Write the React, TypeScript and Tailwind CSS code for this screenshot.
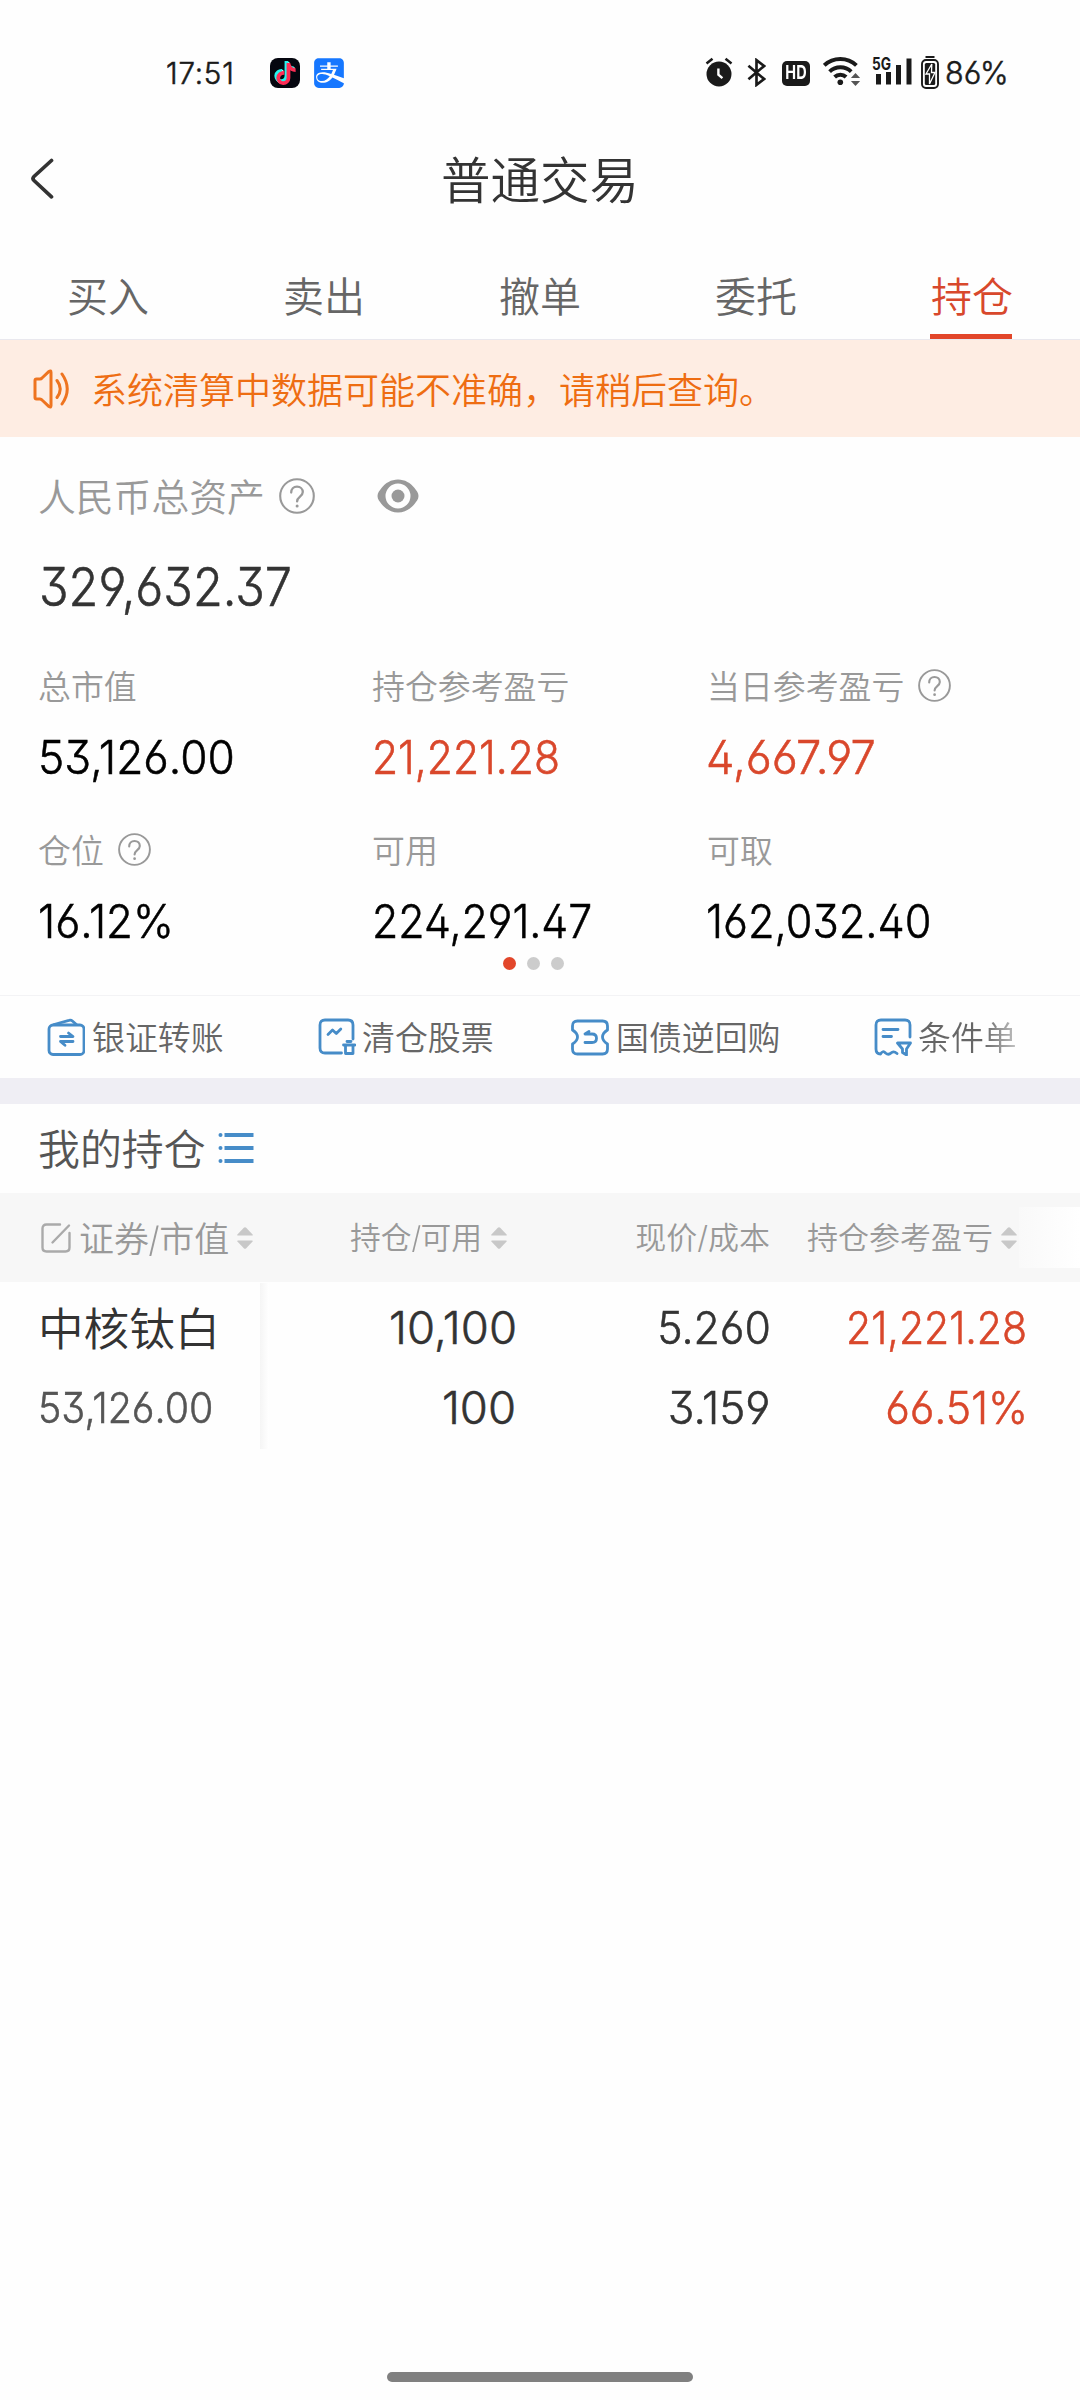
import React from 'react';
import { FaAlipay, FaTiktok } from 'react-icons/fa6';

type NumProps = { children: React.ReactNode; className?: string };

// Figures use open 6/9 shapes and a flat-topped 3, slightly condensed.
function Num({ children, className = '' }: NumProps) {
  return (
    <span
      className={`inline-block whitespace-nowrap font-light [-webkit-text-stroke:0.55px_currentColor] [font-feature-settings:'ss01','cv09'] ${className}`}
    >
      {children}
    </span>
  );
}

function Help({ className }: { className: string }) {
  return (
    <svg viewBox="0 0 36 36" fill="none" stroke="#999" className={className}>
      <circle cx="18" cy="18" r="16.8" strokeWidth="2.1" />
      <path d="M12.2 14.6c0-3.500 2.400-5.900 5.800-5.900s5.800 2.300 5.800 5.400c0 4.500-5.700 4.600-5.700 9.300" strokeWidth="2.300" strokeLinecap="round" />
      <circle cx="18.1" cy="28" r="1.500" fill="#999" stroke="none" />
    </svg>
  );
}

function Sort() {
  return (
    <svg viewBox="0 0 16 22" className="h-[22px] w-4 shrink-0" fill="#c8c8c8">
      <path d="M6.8.8a1.7 1.7 0 0 1 2.4 0L15.6 7.4q.6 1.2-.6 1.2H1Q-.2 8.6.4 7.4z" />
      <path d="M6.8 21.2a1.7 1.7 0 0 0 2.4 0l6.4-6.6q.6-1.2-.6-1.2H1q-1.2 0-.6 1.2z" />
    </svg>
  );
}

function StatusBar() {
  return (
    <div className="flex h-[130px] items-start pl-[166px] pt-[52px] text-[#1a1a1a]">
      <div className="flex h-[42px] w-[104px] items-center">
        <Num className="text-[29.5px] tracking-[0.8px]">17:51</Num>
      </div>
      <div className="mt-[6px] grid h-[30px] w-[30px] place-items-center rounded-lg bg-[#05060f]">
        <FaTiktok className="col-start-1 row-start-1 h-[22px] w-[20px] -translate-x-px -translate-y-px text-[#25f4ee]" />
        <FaTiktok className="col-start-1 row-start-1 h-[22px] w-[20px] translate-x-px translate-y-px text-[#fe2c55]" />
        <FaTiktok className="col-start-1 row-start-1 h-[22px] w-[20px] text-white" />
      </div>
      <FaAlipay className="ml-[14px] mt-[4px] h-[34px] w-[30px] text-[#1677ff]" />
      <svg viewBox="0 0 28 30" className="ml-[361px] mt-[5px] h-[30px] w-[28px]" fill="none" stroke="#1a1a1a">
        <circle cx="14" cy="17" r="12.5" fill="#1a1a1a" stroke="none" />
        <path d="M1.5 6.5 7.5 1.8M26.5 6.5l-6-4.7" strokeWidth="2.6" />
        <path d="M13.4 11.5v6.2l4 3.4" stroke="#fff" strokeWidth="2.4" />
      </svg>
      <svg viewBox="0 0 20 30" className="ml-[14px] mt-[6px] h-[29px] w-[19px]" fill="none" stroke="#1a1a1a" strokeWidth="2.8">
        <path d="M1.5 8 18 21.8 10 28V2l8 6.2L1.5 22" />
      </svg>
      <div className="ml-[16px] mt-[9px] flex h-[25px] w-[28px] items-center justify-center rounded-[5px] bg-[#1a1a1a] text-[19px] font-bold text-white">
        <span className="scale-x-[.76]">HD</span>
      </div>
      <svg viewBox="0 0 38 30" className="ml-[13px] mt-[4px] h-[30px] w-[38px]" fill="none" stroke="#1a1a1a" strokeWidth="4">
        <path d="M1.2 9.4a23.5 23.5 0 0 1 32.2 0M6.6 15.6a15.8 15.8 0 0 1 21.6 0M11.6 21a8.4 8.4 0 0 1 11.5 0" />
        <circle cx="17.3" cy="26.2" r="2.8" fill="#1a1a1a" stroke="none" />
        <path d="m32.5 17 4.6 5h-9.2zM32.5 30l4.6-5h-9.2z" fill="#555" stroke="none" />
      </svg>
      <svg viewBox="0 -8 42 38" className="ml-[11px] -mt-[4px] h-[38px] w-[42px]" fill="#1a1a1a">
        <text x="0" y="14" fontSize="17" fontWeight="700" textLength="19" lengthAdjust="spacingAndGlyphs" fontFamily="Inter">5G</text>
        <path d="M4 18h5v10.500H4zM14 16h5v12.500h-5zM24 9h5v19.500h-5zM34.500 2.500h5v26h-5z" />
      </svg>
      <svg viewBox="0 0 18 33" className="ml-[7px] mt-[4px] h-[33px] w-[18px]" fill="none" stroke="#1a1a1a">
        <path d="M4.500 1h9" strokeWidth="2" />
        <rect x="1" y="4" width="16" height="28" rx="4" strokeWidth="1.900" />
        <rect x="3.800" y="7" width="10.400" height="22" rx="1.500" fill="#1a1a1a" stroke="none" />
        <path d="M10.800 8 5 18h3.500v10L14 16.500h-3.500z" fill="#1a1a1a" stroke="#fff" strokeWidth="1.300" />
      </svg>
      <div className="ml-[6px] flex h-[42px] items-center">
        <Num className="origin-left text-[30.5px]">86%</Num>
      </div>
    </div>
  );
}

function Header() {
  return (
    <header className="flex h-[100px] items-center">
      <svg viewBox="0 0 24 42" className="-mt-[3px] ml-[30px] h-[42px] w-[24px]" fill="none" stroke="#333" strokeWidth="3.7" strokeLinecap="round">
        <path d="M21.500 2.500 4 18.500q-2 2 0 4L21.500 38.800" />
      </svg>
      <h1 className="mr-[54px] flex-1 pt-[3px] text-center text-[49.500px] text-[#333]">普通交易</h1>
    </header>
  );
}

const tabs = ['买入', '卖出', '撤单', '委托', '持仓'];

function Tabs() {
  return (
    <nav className="grid h-[110px] grid-cols-5 border-b border-[#e9e8ee] text-[41px] text-[#666]">
      {tabs.map((t, i) => (
        <div key={t} className="flex flex-col items-center justify-end">
          <span className={i === 4 ? 'mb-[7px] leading-[60px] text-[#d8482c]' : 'mb-[12px] leading-[60px]'}>{t}</span>
          {i === 4 && <i className="mr-[2px] block h-[5px] w-[82px] bg-[#e2462a]" />}
        </div>
      ))}
    </nav>
  );
}

function Notice() {
  return (
    <div className="flex h-[97px] items-center bg-[#feede3] pl-[33px] text-[36px] text-[#ee6d12]">
      <svg viewBox="0 0 38 40" className="mr-[20px] h-[40px] w-[38px]" fill="none" stroke="#ee7420" strokeWidth="3" strokeLinejoin="round" strokeLinecap="round">
        <path d="M2 11.500q0-1.500 1.500-1.500H7q1.200 0 2-1l7-6.600q2-1.400 2 1v33.200q0 2.400-2 1L9 31q-.8-1-2-1H3.500Q2 30 2 28.500z" />
        <path d="M24 11.500q6.500 8.500 0 17M29 5q10.500 15 0 30" />
      </svg>
      <span className="pt-[4px]">系统清算中数据可能不准确，请稍后查询。</span>
    </div>
  );
}

type Stat = { label: string; value: string; help?: boolean; red?: boolean; fit: string };
const stats: Stat[] = [
  { label: '总市值', value: '53,126.00', fit: 'scale-x-[.945]' },
  { label: '持仓参考盈亏', value: '21,221.28', red: true, fit: 'scale-x-[.909]' },
  { label: '当日参考盈亏', value: '4,667.97', red: true, help: true, fit: '-ml-px scale-x-[.967]' },
  { label: '仓位', value: '16.12%', help: true, fit: 'scale-x-[.934]' },
  { label: '可用', value: '224,291.47', fit: 'scale-x-[.915]' },
  { label: '可取', value: '162,032.40', fit: '-ml-px scale-x-[.925]' },
];

function Assets() {
  return (
    <section className="h-[558px] pl-[38px]">
      <div className="flex h-[118px] items-center text-[37.800px] text-[#999]">
        <span className="w-[241px] whitespace-nowrap pt-[3px]">人民币总资产</span>
        <Help className="h-[36px] w-[36px]" />
        <svg viewBox="0 0 42 34" className="ml-[62px] h-[34px] w-[42px]" fill="#999">
          <path fillRule="evenodd" d="M21 .5c7 0 12.500 3.500 16.500 8.500 2 2.500 4 5 4 8s-2 5.500-4 8c-4 5-9.500 8.500-16.500 8.500S8.500 30 4.500 25c-2-2.500-4-5-4-8s2-5.500 4-8C8.500 4 14 .5 21 .5zM21 4.500a12.500 12.500 0 1 0 0 25 12.500 12.500 0 0 0 0-25z" />
          <circle cx="21" cy="17" r="6.500" />
        </svg>
      </div>
      <div className="flex h-[64px] items-center pl-px pt-px text-[53px] text-[#333]">
        <Num className="origin-left scale-x-[.918]">329,632.37</Num>
      </div>
      <div className="mt-[32px] grid grid-cols-[334px_335px_1fr]">
        {stats.map((s) => (
          <div key={s.label} className="h-[164px]">
            <div className="flex h-[70px] items-center text-[32.900px] text-[#999]">
              <span className="pt-[3px]">{s.label}</span>
              {s.help && <Help className="-mt-[2px] ml-[14px] h-[33px] w-[33px]" />}
            </div>
            <div className={`flex h-[71px] items-center pt-px text-[46.800px] ${s.red ? 'text-[#d9472b]' : 'text-black'}`}>
              <Num className={`origin-left ${s.fit}`}>{s.value}</Num>
            </div>
          </div>
        ))}
      </div>
      <div className="-ml-[38px] -mt-[22px] flex h-[13px] items-center pl-[503px]">
        <i className="mr-[11px] size-[13px] rounded-full bg-[#e2462a]" />
        <i className="mr-[11px] size-[13px] rounded-full bg-[#ccc]" />
        <i className="size-[13px] rounded-full bg-[#ccc]" />
      </div>
    </section>
  );
}

const iconProps = {
  fill: 'none',
  stroke: '#468cc8',
  strokeWidth: 2.8,
  strokeLinecap: 'round' as const,
  strokeLinejoin: 'round' as const,
  viewBox: '0 0 38 38',
};

function Shortcuts() {
  return (
    <div className="flex h-[83px] items-center border-t border-[#f3f3f5] pl-[47px] text-[32.900px] text-[#666]">
      <div className="flex w-[271px] items-center">
        <svg {...iconProps} className="mr-[7px] h-[38px] w-[38px]">
          <rect x="2" y="7" width="35" height="29.500" rx="4" />
          <path d="M7 6.500 22 2.400q2-.6 3.400.6l4 3.500" />
          <path d="M13.500 18.500H26l-4.500-3.500M26 23.500H13.500l4.500 3.800" />
        </svg>
        <span className="pt-[3px]">银证转账</span>
      </div>
      <div className="flex w-[253px] items-center">
        <svg {...iconProps} className="mr-[6px] h-[38px] w-[38px]">
          <path d="M23.500 35H7q-5 0-5-5V7q0-5 5-5h23q5 0 5 5v14" />
          <path d="m10 16.500 4.500-4.500 3.800 3.500 4.500-4.500" />
          <path d="M29 23.500h4M25.500 27h11.500M27.500 28v7.500h7.500V28" />
        </svg>
        <span className="pt-[3px]">清仓股票</span>
      </div>
      <div className="flex w-[303px] items-center">
        <svg {...iconProps} className="mr-[7px] h-[38px] w-[38px]">
          <path d="M6.500 3h25q5 0 5 5v4q-5 3.200-5 7t5 7v5q0 5-5 5h-25q-5 0-5-5v-5q5-3.200 5-7t-5-7V8q0-5 5-5z" />
          <path d="M18 13.500l-4 2.500H21q4.500 0 4.500 4.200T21 24.500h-7" />
        </svg>
        <span className="pt-[3px]">国债逆回购</span>
      </div>
      <div className="flex items-center">
        <svg {...iconProps} className="mr-[6px] h-[38px] w-[38px]">
          <path d="M36 19V7q0-5-5-5H7Q2 2 2 7v24q0 5 4.500 5 2.300-4 5-1 3 2.500 5.500 0 2.500-2.500 6 .5" />
          <path d="M9 11.500h15M9 18.500h8.500" />
          <path d="M23.500 25h13l-4 6v6l-4-2.500V31z" />
        </svg>
        <span className="bg-gradient-to-r from-[#666] from-65% to-[#c4c4c4] bg-clip-text pt-[3px] text-transparent">条件单</span>
      </div>
    </div>
  );
}

function Holdings() {
  return (
    <section>
      <div className="flex h-[89px] items-center pl-[38px] pt-[1px] text-[41.900px] text-[#555]">
        <span className="pt-[3px]">我的持仓</span>
        <svg viewBox="0 0 36 32" className="-mt-[3px] ml-[12px] h-[32px] w-[36px]" fill="#468cc8">
          <circle cx="2.500" cy="3" r="2" /><circle cx="2.500" cy="16" r="2" /><circle cx="2.500" cy="29" r="2" />
          <path d="M6.500 1h29v4h-29zM6.500 14h29v4h-29zM6.500 27h29v4h-29z" />
        </svg>
      </div>
      <div className="flex h-[89px] items-center bg-[#f7f7f7] text-[31.300px] text-[#999]">
        <div className="flex w-[260px] items-center pl-[41px] text-[35px]">
          <svg viewBox="0 0 30 30" className="mr-[8px] h-[30px] w-[30px]" fill="none" stroke="#aaa" strokeWidth="2.400" strokeLinecap="round">
            <path d="M19 1.500H5.500q-4 0-4 4v19q0 4 4 4h19q4 0 4-4V10M11.500 19.500 28 2.500" />
          </svg>
          <span className="mr-[8px] pt-[3px]">证券<span className="-mx-[1px] inline-block scale-x-90">/</span>市值</span>
          <Sort />
        </div>
        <div className="flex w-[247px] items-center justify-end gap-[9px]">
          <span className="pt-[2px] text-[30.800px]">持仓<span className="-mx-[1px] inline-block scale-x-90">/</span>可用</span>
          <Sort />
        </div>
        <div className="w-[263px] pt-[2px] text-right text-[31px]">现价/成本</div>
        <div className="flex w-[249px] items-center justify-end gap-[8px] pr-[2px]">
          <span className="pt-[2px] text-[31px]">持仓参考盈亏</span>
          <Sort />
        </div>
        <div className="h-[61px] flex-1 bg-gradient-to-r from-[#f9f9f9] to-white" />
      </div>
      <div className="flex h-[168px] pt-px text-[45.500px] text-[#333]">
        <div className="w-[260px] pl-[38px]">
          <div className="flex h-[92px] items-center whitespace-nowrap pt-[3px] text-[45.600px]">中核钛白</div>
          <div className="flex h-[66px] items-center text-[#555]">
            <Num className="origin-left scale-x-[.927] text-[42.500px]">53,126.00</Num>
          </div>
        </div>
        <div className="h-[166px] w-[9px] bg-gradient-to-r from-[#f5f5f5] to-white" />
        <div className="w-[248px] text-right">
          <div className="flex h-[91px] items-center justify-end"><Num className="origin-right">10,100</Num></div>
          <div className="flex h-[69px] items-center justify-end"><Num className="mr-px origin-right">100</Num></div>
        </div>
        <div className="w-[254px]">
          <div className="flex h-[91px] items-center justify-end"><Num className="origin-right scale-x-[.94]">5.260</Num></div>
          <div className="flex h-[69px] items-center justify-end"><Num className="origin-right scale-x-[.965]">3.159</Num></div>
        </div>
        <div className="w-[256px] text-[#d9472b]">
          <div className="flex h-[91px] items-center justify-end"><Num className="origin-right scale-x-[.9]">21,221.28</Num></div>
          <div className="-mr-px flex h-[69px] items-center justify-end"><Num className="origin-right scale-x-[.94]">66.51%</Num></div>
        </div>
      </div>
    </section>
  );
}

export default function App() {
  return (
    <main lang="zh-CN" className="flex h-[2400px] w-[1080px] flex-col overflow-hidden bg-[#fefefe] font-[350] [font-family:Inter,'Noto_Sans_CJK_SC',sans-serif]">
      <StatusBar />
      <Header />
      <Tabs />
      <Notice />
      <Assets />
      <Shortcuts />
      <div className="h-[26px] bg-[#efeef4]" />
      <Holdings />
      <i className="mx-auto mb-[18px] mt-auto block h-[10px] w-[306px] rounded-full bg-[#808080]" />
    </main>
  );
}
